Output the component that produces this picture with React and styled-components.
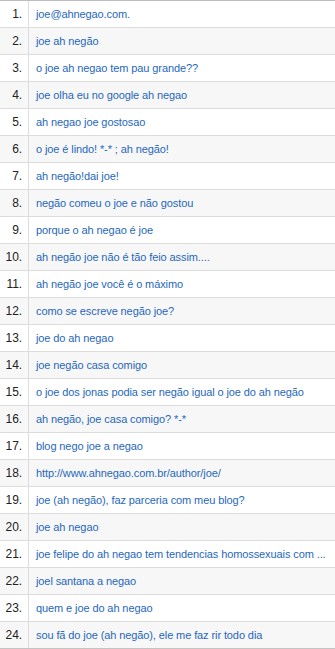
import styled, { createGlobalStyle } from "styled-components";

const GlobalStyle = createGlobalStyle`
    html, body {
        margin: 0;
        padding: 0;
        background: #ffffff;
    }
`;

const List = styled.ol`
    list-style: none;
    margin: 0;
    padding: 0;
    width: 335px;
    border-top: 1px solid #bdbdbd;
    font-family: "Liberation Sans", Arial, sans-serif;
    font-size: 11px;
    letter-spacing: -0.1px;
`;

const Row = styled.li`
    display: grid;
    grid-template-columns: 29px 1fr;
    height: 26px;
    border-bottom: 1px solid ${props => props.last ? "#c4c4c4" : "#dddddd"};
    background-color: ${props => props.even ? "#f7f7f7" : "#ffffff"};
`;

const Rank = styled.span`
    display: flex;
    align-items: center;
    justify-content: flex-end;
    padding-right: 6px;
    border-right: 1px solid #dddddd;
    color: #222222;
    font-size: 12px;
`;

const Term = styled.a`
    display: flex;
    align-items: center;
    padding-left: 7px;
    color: #1f67bd;
    text-decoration: none;
    white-space: nowrap;
    overflow: hidden;
`;

const searches = [
    "joe@ahnegao.com.",
    "joe ah negão",
    "o joe ah negao tem pau grande??",
    "joe olha eu no google ah negao",
    "ah negao joe gostosao",
    "o joe é lindo! *-* ; ah negão!",
    "ah negão!dai joe!",
    "negão comeu o joe e não gostou",
    "porque o ah negao é joe",
    "ah negão joe não é tão feio assim....",
    "ah negão joe você é o máximo",
    "como se escreve negão joe?",
    "joe do ah negao",
    "joe negão casa comigo",
    "o joe dos jonas podia ser negão igual o joe do ah negão",
    "ah negão, joe casa comigo? *-*",
    "blog nego joe a negao",
    "http://www.ahnegao.com.br/author/joe/",
    "joe (ah negão), faz parceria com meu blog?",
    "joe ah negao",
    "joe felipe do ah negao tem tendencias homossexuais com ...",
    "joel santana a negao",
    "quem e joe do ah negao",
    "sou fã do joe (ah negão), ele me faz rir todo dia",
];

export default function App() {
    return (
        <>
            <GlobalStyle />
            <List>
                {searches.map((text, i) => (
                    <Row key={i} even={i % 2 === 1} last={i === searches.length - 1}>
                        <Rank>{i + 1}.</Rank>
                        <Term href="#">{text}</Term>
                    </Row>
                ))}
            </List>
        </>
    );
}
